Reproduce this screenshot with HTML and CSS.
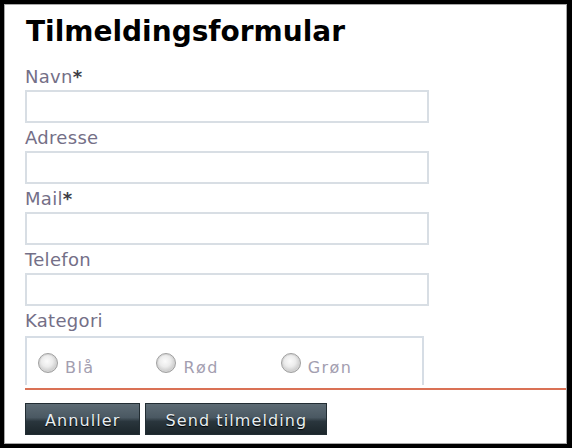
FILE: index.html
```html
<!DOCTYPE html>
<html lang="da">
<head>
<meta charset="utf-8">
<title>Tilmeldingsformular</title>
<link rel="stylesheet" href="styles.css">
</head>
<body>
<div class="frame">
  <h1 class="title">Tilmeldingsformular</h1>
  <form class="form">
    <div class="field">
      <label class="label">Navn<span class="req">*</span></label>
      <input class="input" type="text">
    </div>
    <div class="field">
      <label class="label">Adresse</label>
      <input class="input" type="text">
    </div>
    <div class="field">
      <label class="label">Mail<span class="req">*</span></label>
      <input class="input" type="text">
    </div>
    <div class="field">
      <label class="label">Telefon</label>
      <input class="input" type="text">
    </div>
    <div class="field">
      <label class="label">Kategori</label>
      <div class="choices">
        <label class="choice"><input class="radio" type="radio" name="kat"><span class="choice-text">Blå</span></label>
        <label class="choice"><input class="radio" type="radio" name="kat"><span class="choice-text">Rød</span></label>
        <label class="choice"><input class="radio" type="radio" name="kat"><span class="choice-text">Grøn</span></label>
      </div>
    </div>
    <div class="divider"></div>
    <div class="actions">
      <button class="btn" type="button">Annuller</button>
      <button class="btn" type="button">Send tilmelding</button>
    </div>
  </form>
</div>
</body>
</html>
```
FILE: styles.css
```css
html, body {
  margin: 0;
  height: 100%;
}
body {
  background: #000;
  padding: 4px 5px 4px 4px;
  box-sizing: border-box;
  font-family: "DejaVu Sans", Verdana, sans-serif;
}
.frame {
  box-sizing: border-box;
  width: 563px;
  height: 440px;
  background: #fff;
  border: 1px solid #a8a8a8;
  padding: 12px 0 0 20px;
}
.title {
  margin: 0 0 0 1px;
  font-family: "DejaVu Sans", Verdana, sans-serif;
  font-weight: bold;
  font-size: 28px;
  line-height: 30px;
  letter-spacing: 0;
  color: #000;
}
.form {
  margin-top: 18px;
  display: flex;
  flex-direction: column;
  gap: 3px;
}
.field {
  display: flex;
  flex-direction: column;
  gap: 2px;
}
.label {
  font-size: 18px;
  line-height: 23px;
  height: 23px;
  letter-spacing: 0.3px;
  color: #746f87;
}
.req {
  color: #3c3c44;
  font-weight: bold;
  letter-spacing: 0;
}
.input {
  box-sizing: border-box;
  width: 404px;
  height: 33px;
  margin: 0;
  padding: 0 4px;
  border: 2px solid #d8dee4;
  background: #fff;
  outline: none;
}
.choices {
  box-sizing: border-box;
  margin-top: 2px;
  width: 399px;
  height: 49px;
  border: 2px solid #d6dde5;
  border-bottom: none;
  padding: 15px 0 0 11px;
  display: flex;
  gap: 62px;
}
.choice {
  display: flex;
  align-items: flex-start;
  gap: 7px;
}
.radio {
  appearance: none;
  -webkit-appearance: none;
  box-sizing: border-box;
  width: 20px;
  height: 20px;
  margin: 0;
  border-radius: 50%;
  border: 1px solid #a0a0a0;
  background: radial-gradient(circle at 45% 40%, #fbfbfb 0%, #ececec 38%, #cdcdcd 68%, #b2b2b2 100%);
  box-shadow: inset 0 0 0 1px #d6d6d6;
}
.choice-text {
  margin-top: 5px;
  font-size: 16px;
  line-height: 19px;
  letter-spacing: 1.4px;
  color: #a39eb0;
}
.divider {
  height: 2px;
  background: #da7155;
}
.actions {
  margin-top: 10px;
  display: flex;
  gap: 5px;
}
.btn {
  box-sizing: border-box;
  height: 32px;
  margin: 0;
  padding: 3px 19px 0;
  line-height: 27px;
  border: 1px solid #222d33;
  background: linear-gradient(#5d6b74 0%, #4a5862 45%, #2a363d 58%, #1c262b 100%);
  color: #e6edf0;
  font-family: "DejaVu Sans", Verdana, sans-serif;
  font-size: 16px;
  letter-spacing: 1.1px;
  text-shadow: 0 1px 1px #000;
  cursor: pointer;
}
```
